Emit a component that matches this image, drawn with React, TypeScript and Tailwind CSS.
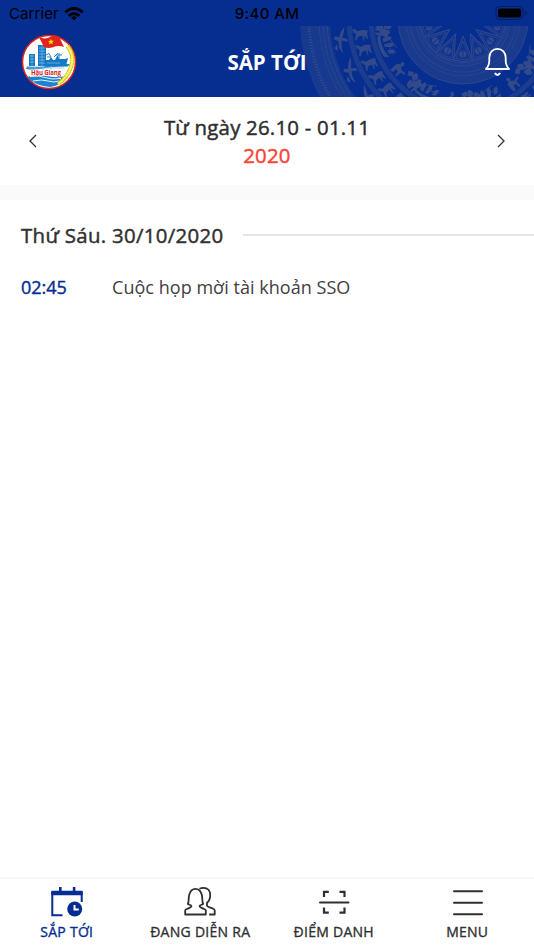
import type { ReactNode } from 'react';
import clsx from 'clsx';

const ring = (count: number) => Array.from({ length: count }, (_, i) => (i * 360) / count);

const DrumPattern = () => (
  <svg
    className="absolute top-0 right-0"
    width="236"
    height="71"
    viewBox="298 26 236 71"
    fill="none"
    stroke="#a0907c"
    opacity="0.29"
  >
    <g transform="translate(463 19)">
      <circle r="54" strokeWidth="22" opacity="0.45" />
      <circle r="44" strokeWidth="0.7" />
      <circle r="47" strokeWidth="0.7" />
      <circle r="53" strokeWidth="1.2" strokeDasharray="1.2 1" />
      <circle r="57" strokeWidth="0.6" />
      <circle r="65" strokeWidth="0.8" />
      <circle r="92" strokeWidth="5" opacity="0.5" />
      <circle r="114" strokeWidth="5" opacity="0.5" />
      <circle r="148" strokeWidth="30" opacity="0.4" />
      <circle r="136" strokeWidth="0.8" />
      <circle r="140" strokeWidth="2.4" strokeDasharray="0.8 1.6" />
      <circle r="144" strokeWidth="0.6" />
      <circle r="154" strokeWidth="3" strokeDasharray="1.2 1.6" />
      {ring(14).map((a) => (
        <g key={a} transform={`rotate(${a})`}>
          <path d="M0 17-9.500 41Q0 44 9.500 41Z" fill="#a0907c" fillOpacity="0.2" strokeWidth="1" />
          <path d="M0 22-7 39.500Q0 42 7 39.500Z" strokeWidth="0.7" />
          <path d="M-.6 32v6.500C-4.500 38-4.500 32.500-.6 32ZM.6 32v6.500C4.500 38 4.500 32.500 .6 32Z" fill="#a0907c" strokeWidth="0.3" />
        </g>
      ))}
      {/* dancers, houses and boats */}
      {ring(8).map((a) => (
        <g key={a} transform={`rotate(${a + 3})`} fill="#a0907c" stroke="none">
          <path d="M-11 88v-9l3-2-1-3 3-1 1 3-1 2 3 2 5-1v2l-4 1v6h-2v-4l-3-1-1 5z" />
          <path d="M14 87v-8l-4-1 1-2 4 1v-4l3-1 1 4-1 2 3 2-1 7h-2v-5l-2 1v4z" />
          <path d="m2 75 5-3 2 4-4 3z" />
          <g transform="rotate(-22)">
            <path d="M-13 83q12 5 25-1l-2 5q-11 3-21 0z" />
            <path d="M-8 82v-6l2-3 2 3v7zM-2 83l1-8 3-2 1 4-2 6zM5 82l1-6 4-2-1 7z" />
            <path d="m-6 76 12-4M3 79l8-2" stroke="#a0907c" strokeWidth="0.8" />
          </g>
          <g transform="rotate(-10)">
            <path d="M-3 71q5 2 4 6l-5 1q-2-4 1-7ZM-4 80q5 0 6 4l-4 4q-4-3-2-8ZM4 76q4-1 5 3l-3 4q-4-3-2-7Z" />
          </g>
        </g>
      ))}
      {/* deer, standing along the radius */}
      {ring(42).map((a) => (
        <g key={a} transform={`rotate(${a + 4})`} fill="#a0907c" stroke="none">
          <path d="M-4 98q-1 5 0 8l-3 3 0 2 6-3 5 2 1-1-4-3 0-4 5 0 0-1-5-1 4-2 0-1-5 0-3-1z" />
          <path d="m-3 110-3 1" stroke="#a0907c" strokeWidth="0.7" />
        </g>
      ))}
      {/* flying birds */}
      {ring(24).map((a) => (
        <g key={a} transform={`rotate(${a + 5}) translate(0 124) rotate(12) translate(0 -124)`} fill="#a0907c" stroke="none">
          <path d="M-14 121q7 0 11 2l1-5 3-1-1 6q7 1 12-2l-1 2q-5 4-10 3l-2 5-3-1 1-4q-6-1-11-5z" />
          <path d="M4 128q4-2 7-1l-3 3z" />
        </g>
      ))}
    </g>
  </svg>
);

const Logo = () => (
  <svg width="56" height="56" viewBox="0 0 56 56">
    <circle cx="28" cy="28" r="26.5" fill="#fff" stroke="#e32219" strokeWidth="1.5" />
    <path d="M6 32.500q15 1 22-1t21-1.500l-2 2.500q-17 0-25 2T5 35z" fill="#2384cf" />
    <path d="M6 43q8-3 19-1 10 2 22 0-7 10-18 11Q14 52 6 43Z" fill="#1c83cf" />
    <path d="M9 42.500q9-1.500 15 1t16 1M12 47q9-2 15 0t11 0" fill="none" stroke="#fff" strokeWidth="0.9" />
    <path d="M8 20h6v12H8zM17 11h8v21h-8z" fill="#1579c4" />
    <path d="M9 22h4M9 25h4M9 28h4M18 14h6M18 17h6M18 20h6M18 23h6M18 26h6M18 29h6" stroke="#8cc4ea" strokeWidth="0.7" />
    <path d="M21 11v21M11 20v12" stroke="#8cc4ea" strokeWidth="0.5" />
    <path d="M25 26h3l2-3 2 3h2l2-4h1l1 3h6l3-1-2 8H25z" fill="#1579c4" />
    <path d="m25 21 3-1.500 2 3.500h-4M33 23l4-4M38 19v6M35 21h6" fill="none" stroke="#1579c4" strokeWidth="0.9" />
    <path d="M26 29h13M7 34h36M14 33v5M22 33v4M30 32v4" stroke="#83bee5" strokeWidth="0.7" />
    <path d="M18 3q6 3 12-.5 5-2 8 .2L43 13q-6-2-11 .3-5 1.700-9-.3Z" fill="#e32219" />
    <path d="m29.800 4.700.9 2 2.200.1-1.700 1.400.6 2.100-1.900-1.100-2 1.300.7-2.300-1.700-1.300h2.200z" fill="#ffe800" />
    <path d="M46.500 12q7.500 10 3.500 21T37 50" fill="none" stroke="#d3c61c" strokeWidth="4.4" strokeDasharray="2.4 .5" />
    <path d="M46.500 12q7.500 10 3.500 21T37 50" fill="none" stroke="#fff36b" strokeWidth="1.8" />
    <text
      x="25"
      y="41"
      textAnchor="middle"
      fontFamily="Open Sans, sans-serif"
      fontSize="6.2"
      fontWeight="700"
      fill="#e32219"
      stroke="#fff"
      strokeWidth="0.8"
      paintOrder="stroke"
      textLength="30"
    >
      Hậu Giang
    </text>
  </svg>
);

const StatusBar = () => (
  <div className="grid h-[26px] grid-cols-3 items-center font-['Inter',sans-serif] text-[15px] leading-5 text-black">
    <div className="flex items-center gap-[5px] pt-[2px] pl-[9px]">
      <span className="tracking-[0.1px]">Carrier</span>
      <svg width="20" height="14" viewBox="0 0 20 14" fill="none" stroke="#000" strokeWidth="2.8">
        <path d="M1.200 5.300Q10-2.400 18.800 5.300M4.600 8.800q5.400-4.500 10.800 0" />
        <path d="m10 13.500-3-3q3-2.400 6 0Z" fill="#000" stroke="none" />
      </svg>
    </div>
    <span className="pt-[2px] text-center font-medium tracking-[0.4px]">9:40 AM</span>
    <svg className="mr-[6px] justify-self-end" width="33" height="16" viewBox="0 0 33 16">
      <rect x="1" y="1.5" width="27" height="13" rx="4" fill="none" stroke="#03205f" strokeWidth="1.2" />
      <rect x="3" y="3.5" width="23" height="9" rx="2" fill="#000" />
      <path d="M30 5.500q2 .5 2 2.500t-2 2.500z" fill="#03205f" />
    </svg>
  </div>
);

const Header = () => (
  <header className="h-[97px] bg-[#062e91]">
    <StatusBar />
    <div className="relative h-[71px]">
      <DrumPattern />
      <div className="relative grid h-full grid-cols-[1fr_auto_1fr] items-center pr-[23px] pl-[21px]">
        <Logo />
        <h1 className="pt-[1px] pl-[2px] text-center text-[20.5px] font-bold text-white">SẮP TỚI</h1>
        <svg
          className="justify-self-end"
          width="27"
          height="30"
          viewBox="0 0 27 30"
          fill="none"
          stroke="#fff"
          strokeWidth="1.8"
        >
          <path
            d="M2 22h23c-2-2-3.300-4.800-3.300-8.400V10.600c0-5-3.300-8.700-8.200-8.700S5.300 5.600 5.300 10.600v3c0 3.600-1.300 6.400-3.300 8.400Z"
            strokeLinejoin="round"
          />
          <path d="M10.800 26q2.700 3.800 5.400 0" strokeWidth="2" />
        </svg>
      </div>
    </div>
  </header>
);

const WeekPicker = () => (
  <div className="flex h-[88px] items-center justify-between px-7">
    <svg width="10" height="14" viewBox="0 0 10 14" fill="none" stroke="#303030" strokeWidth="1.3">
      <path d="M8 1 2 7l6 6" />
    </svg>
    <div className="text-center text-[20.4px] leading-7 tracking-[0.22px] text-[#2e2e2e] [-webkit-text-stroke:0.45px]">
      <p>Từ ngày 26.10 - 01.11</p>
      <p className="text-[#f9443a]">2020</p>
    </div>
    <svg width="10" height="14" viewBox="0 0 10 14" fill="none" stroke="#303030" strokeWidth="1.3">
      <path d="m2 1 6 6-6 6" />
    </svg>
  </div>
);

const Schedule = () => (
  <main className="flex-1 pl-[21px]">
    <div className="mt-5 flex items-center gap-[19px]">
      <h2 className="text-[20.4px] leading-[30px] tracking-[0.32px] text-[#303030] [-webkit-text-stroke:0.45px]">
        Thứ Sáu. 30/10/2020
      </h2>
      <div className="h-[2px] flex-1 bg-[#e5e5e5]" />
    </div>
    <div className="mt-[25px] flex text-lg leading-6">
      <span className="w-[91px] text-[#062e91] [-webkit-text-stroke:0.4px]">02:45</span>
      <span className="tracking-[0.04px] text-[#404040]">Cuộc họp mời tài khoản SSO</span>
    </div>
  </main>
);

const Tab = ({ label, active, children }: { label: string; active?: boolean; children: ReactNode }) => (
  <div className={clsx('flex flex-1 flex-col items-center', active ? 'text-[#062e91]' : 'text-[#303030]')}>
    <svg className="mt-[7px]" width="36" height="34" viewBox="0 0 36 34" fill="none" stroke="currentColor">
      {children}
    </svg>
    <span className="mt-[2px] text-sm leading-5 tracking-[0.27px] [-webkit-text-stroke:0.35px]">{label}</span>
  </div>
);

const TabBar = () => (
  <nav className="flex h-[73px] border-t-2 border-[#f8f8f8]">
    <Tab label="SẮP TỚI" active>
      <path d="M3.300 6v23.300h10.200M32.700 6v10" strokeWidth="2" />
      <path d="M2.300 4.800h31.400v4.400H2.300zM10 1h2.600v5H10zM23.800 1h2.600v5h-2.600z" fill="currentColor" stroke="none" />
      <circle cx="25.700" cy="23" r="7.500" fill="currentColor" stroke="none" />
      <path d="M25.500 19v4.500h4.300" stroke="#fff" strokeWidth="2" />
    </Tab>
    <Tab label="ĐANG DIỄN RA">
      <path
        d="M3.200 28.500h20.600v-4.300c0-1.500-6.200-1.800-6.200-4.200 0-1.300 3.600-1.300 3.600-1.900-1.500-2.300-.3-5.700-1.500-9.600-1.200-4-3.400-5.600-6.200-5.600S8.500 4.500 7.300 8.500c-1.200 3.900 0 7.300-1.500 9.600 0 .6 3.600.6 3.600 1.900 0 2.400-6.200 2.700-6.200 4.200Z"
        strokeWidth="1.8"
        strokeLinejoin="round"
      />
      <path
        d="M17.500 2.800c1.200-.7 2.600-1 4-1 4.300 0 6.700 3 6.700 7.200 0 3.800-1.200 6.300-3.200 7.800v3c0 1.500 7.700 2.200 7.700 4.500v4.200h-5.500"
        strokeWidth="1.8"
        strokeLinejoin="round"
      />
    </Tab>
    <Tab label="ĐIỂM DANH">
      <path d="M8 11V5.900h4.800M23.500 5.900h5V11M8 21.500v5.100h4.800M23.500 26.600h5v-5.100" strokeWidth="2.2" />
      <path d="M4 16.600h28.500" strokeWidth="2" strokeLinecap="round" />
    </Tab>
    <Tab label="MENU">
      <path d="M5 5.200h28M5 16.700h28M5 28.200h28" strokeWidth="2" strokeLinecap="round" />
    </Tab>
  </nav>
);

export default function App() {
  return (
    <div className="flex h-[950px] w-[534px] flex-col overflow-hidden bg-white font-['Open_Sans','Noto_Sans',sans-serif]">
      <Header />
      <WeekPicker />
      <div className="h-[15px] bg-[#fafafa]" />
      <Schedule />
      <TabBar />
    </div>
  );
}
